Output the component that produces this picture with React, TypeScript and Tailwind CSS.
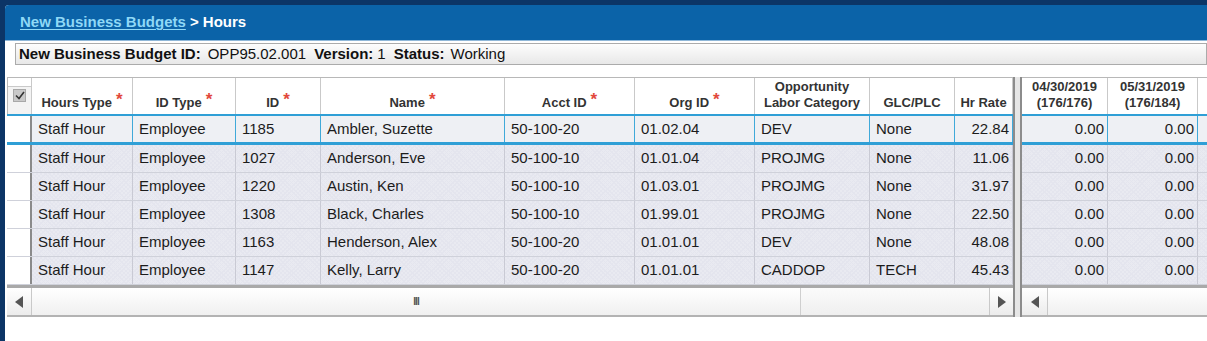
import React from 'react';

type Col = { key: string; w: string; label: React.ReactNode; req?: boolean; right?: boolean };

const leftCols: Col[] = [
  { key: 'hoursType', w: 'w-[101px]', label: 'Hours Type', req: true },
  { key: 'idType', w: 'w-[103px]', label: 'ID Type', req: true },
  { key: 'id', w: 'w-[85px]', label: 'ID', req: true },
  { key: 'name', w: 'w-[184px]', label: 'Name', req: true },
  { key: 'acct', w: 'w-[130px]', label: 'Acct ID', req: true },
  { key: 'org', w: 'w-[120px]', label: 'Org ID', req: true },
  { key: 'labor', w: 'w-[115px]', label: <>Opportunity<br />Labor Category</> },
  { key: 'glc', w: 'w-[85px]', label: 'GLC/PLC' },
  { key: 'rate', w: 'w-[58px]', label: 'Hr Rate', right: true },
];

const rightCols: Col[] = [
  { key: 'apr', w: 'w-[86px]', label: <>04/30/2019<br />(176/176)</>, right: true },
  { key: 'may', w: 'w-[90px]', label: <>05/31/2019<br />(176/184)</>, right: true },
];

const rows = [
  { hoursType: 'Staff Hour', idType: 'Employee', id: '1185', name: 'Ambler, Suzette', acct: '50-100-20', org: '01.02.04', labor: 'DEV', glc: 'None', rate: '22.84' },
  { hoursType: 'Staff Hour', idType: 'Employee', id: '1027', name: 'Anderson, Eve', acct: '50-100-10', org: '01.01.04', labor: 'PROJMG', glc: 'None', rate: '11.06' },
  { hoursType: 'Staff Hour', idType: 'Employee', id: '1220', name: 'Austin, Ken', acct: '50-100-10', org: '01.03.01', labor: 'PROJMG', glc: 'None', rate: '31.97' },
  { hoursType: 'Staff Hour', idType: 'Employee', id: '1308', name: 'Black, Charles', acct: '50-100-10', org: '01.99.01', labor: 'PROJMG', glc: 'None', rate: '22.50' },
  { hoursType: 'Staff Hour', idType: 'Employee', id: '1163', name: 'Henderson, Alex', acct: '50-100-20', org: '01.01.01', labor: 'DEV', glc: 'None', rate: '48.08' },
  { hoursType: 'Staff Hour', idType: 'Employee', id: '1147', name: 'Kelly, Larry', acct: '50-100-20', org: '01.01.01', labor: 'CADDOP', glc: 'TECH', rate: '45.43' },
];

const hatch =
  'bg-[#e9eaf1] bg-[repeating-linear-gradient(45deg,#e4e5ee_0px,#e4e5ee_1px,transparent_1px,transparent_3px),repeating-linear-gradient(-45deg,#e4e5ee_0px,#e4e5ee_1px,transparent_1px,transparent_3px)]';

function Asterisk() {
  return <span className="ml-[4px] text-[17px] leading-[10px] text-[#e2483c] align-[2px]">*</span>;
}

function HeaderCell({ col }: { col: Col }) {
  return (
    <div
      className={`${col.w} shrink-0 h-full border-r border-[#c9c9c9] flex items-end justify-center pb-[3px] text-center text-[13px] font-bold leading-[16px] text-[#333]`}
    >
      <span>
        {col.label}
        {col.req && <Asterisk />}
      </span>
    </div>
  );
}

function BodyCell({ col, value, selected }: { col: Col; value?: string; selected: boolean }) {
  return (
    <div
      className={`${col.w} shrink-0 h-full border-r ${selected ? 'border-[#3fa9d9]' : 'border-[#c9cad4]'} flex items-center ${
        col.right ? 'justify-end pr-[3px]' : 'pl-[6px]'
      } text-[15px] text-[#1c1c1c] whitespace-nowrap overflow-hidden`}
    >
      {value}
    </div>
  );
}

function Row({ cols, data, selected, lead, fill }: { cols: Col[]; data: Record<string, string>; selected: boolean; lead?: boolean; fill?: boolean }) {
  return (
    <div
      className={`flex ${
        selected ? 'h-[31px] border-t-2 border-b-[3px] border-[#2f9fd6] bg-[#eef0f4]' : `h-[28px] border-b border-[#cfd1da] ${hatch}`
      }`}
    >
      {lead && <div className="w-[25px] shrink-0 h-full bg-white border-r-2 border-[#8a8a8a]" />}
      {cols.map((c) => (
        <BodyCell key={c.key} col={c} value={data[c.key]} selected={selected} />
      ))}
      {fill && <div className="flex-1" />}
    </div>
  );
}

function Arrow({ dir }: { dir: 'left' | 'right' }) {
  return (
    <svg width="8" height="12" viewBox="0 0 8 12">
      {dir === 'left' ? <path d="M8 0 L0 6 L8 12 Z" fill="#555" /> : <path d="M0 0 L8 6 L0 12 Z" fill="#555" />}
    </svg>
  );
}

export default function App() {
  const rightData = { apr: '0.00', may: '0.00' };

  return (
    <div className="w-[1207px] h-[341px] overflow-hidden bg-[#0c3566] pl-[5px] pt-[5px] font-['Liberation_Sans',Arial,sans-serif]">
      <div className="h-full bg-white rounded-tl-[4px] overflow-hidden flex flex-col">
        {/* title bar */}
        <div className="h-[36px] shrink-0 bg-[#0b63a8] border-b border-[#8fb7d8] flex items-center pl-[15px] text-[15px] font-bold">
          <span className="text-[#8fd8f6] underline underline-offset-2">New Business Budgets</span>
          <span className="text-white ml-[4px]">&gt; Hours</span>
        </div>

        {/* header info */}
        <div className="mt-[2px] ml-[10px] h-[22px] border border-[#ababab] bg-linear-to-b from-[#fdfdfd] to-[#e8e8e8] flex items-center pl-[3px] text-[15px] text-[#111] whitespace-nowrap">
          <span className="font-bold">New Business Budget ID:</span>
          <span className="ml-[7px]">OPP95.02.001</span>
          <span className="ml-[8px] font-bold">Version:</span>
          <span className="ml-[4px]">1</span>
          <span className="ml-[8px] font-bold">Status:</span>
          <span className="ml-[6px]">Working</span>
        </div>

        {/* grid */}
        <div className="mt-[12px] ml-[2px] flex h-[240px]">
          {/* left pane */}
          <div className="w-[1006px] shrink-0 flex flex-col">
            <div className="h-[37px] flex border-t border-l border-[#b8b8b8] bg-white">
              <div className="w-[24px] shrink-0 h-full border-r border-[#c9c9c9] flex flex-col">
                <div className="h-[9px] border-b border-[#c9c9c9]" />
                <div className="flex-1 flex justify-center pt-[2px] bg-[#f3f3f3]">
                  <div className="w-[13px] h-[13px] bg-[#c9c9c9] border border-[#a8a8a8] flex items-center justify-center">
                    <svg width="10" height="9" viewBox="0 0 10 9">
                      <path d="M1 4.5 L4 7.5 L9 1" stroke="#333" strokeWidth="1.6" fill="none" />
                    </svg>
                  </div>
                </div>
              </div>
              {leftCols.map((c) => (
                <HeaderCell key={c.key} col={c} />
              ))}
            </div>
            {rows.map((r, i) => (
              <Row key={r.id} cols={leftCols} data={r} selected={i === 0} lead />
            ))}
            <div className="h-[3px] bg-[#a9a9a9]" />
            <div className="flex-1 flex border-b-2 border-[#b3b3b3] bg-[#f1f1f1]">
              <div className="w-[25px] shrink-0 flex items-center justify-center border-r border-[#c9c9c9] bg-linear-to-b from-white to-[#ececec]">
                <Arrow dir="left" />
              </div>
              <div className="w-[769px] shrink-0 border-r border-[#cfcfcf] bg-linear-to-b from-white to-[#f0f0f0] flex items-center justify-center text-[10px] font-bold tracking-[-1px] text-[#555]">
                III
              </div>
              <div className="flex-1 bg-linear-to-b from-[#fbfbfb] to-[#efefef]" />
              <div className="w-[24px] shrink-0 flex items-center justify-center border-l border-[#c9c9c9] bg-linear-to-b from-white to-[#ececec]">
                <Arrow dir="right" />
              </div>
            </div>
          </div>

          {/* frozen divider */}
          <div className="w-[9px] shrink-0 border-x-2 border-[#8c8c8c] bg-[#e6e6e6]" />

          {/* right pane */}
          <div className="flex-1 flex flex-col">
            <div className="h-[37px] flex border-t border-[#b8b8b8] bg-white">
              {rightCols.map((c) => (
                <HeaderCell key={c.key} col={c} />
              ))}
              <div className="flex-1" />
            </div>
            {rows.map((r, i) => (
              <Row key={r.id} cols={rightCols} data={rightData} selected={i === 0} fill />
            ))}
            <div className="h-[3px] bg-[#a9a9a9]" />
            <div className="flex-1 flex border-b-2 border-[#b3b3b3]">
              <div className="w-[26px] shrink-0 flex items-center justify-center border-r border-[#c9c9c9] bg-linear-to-b from-white to-[#ececec]">
                <Arrow dir="left" />
              </div>
              <div className="flex-1 bg-linear-to-b from-white to-[#f0f0f0]" />
            </div>
          </div>
        </div>
      </div>
    </div>
  );
}
